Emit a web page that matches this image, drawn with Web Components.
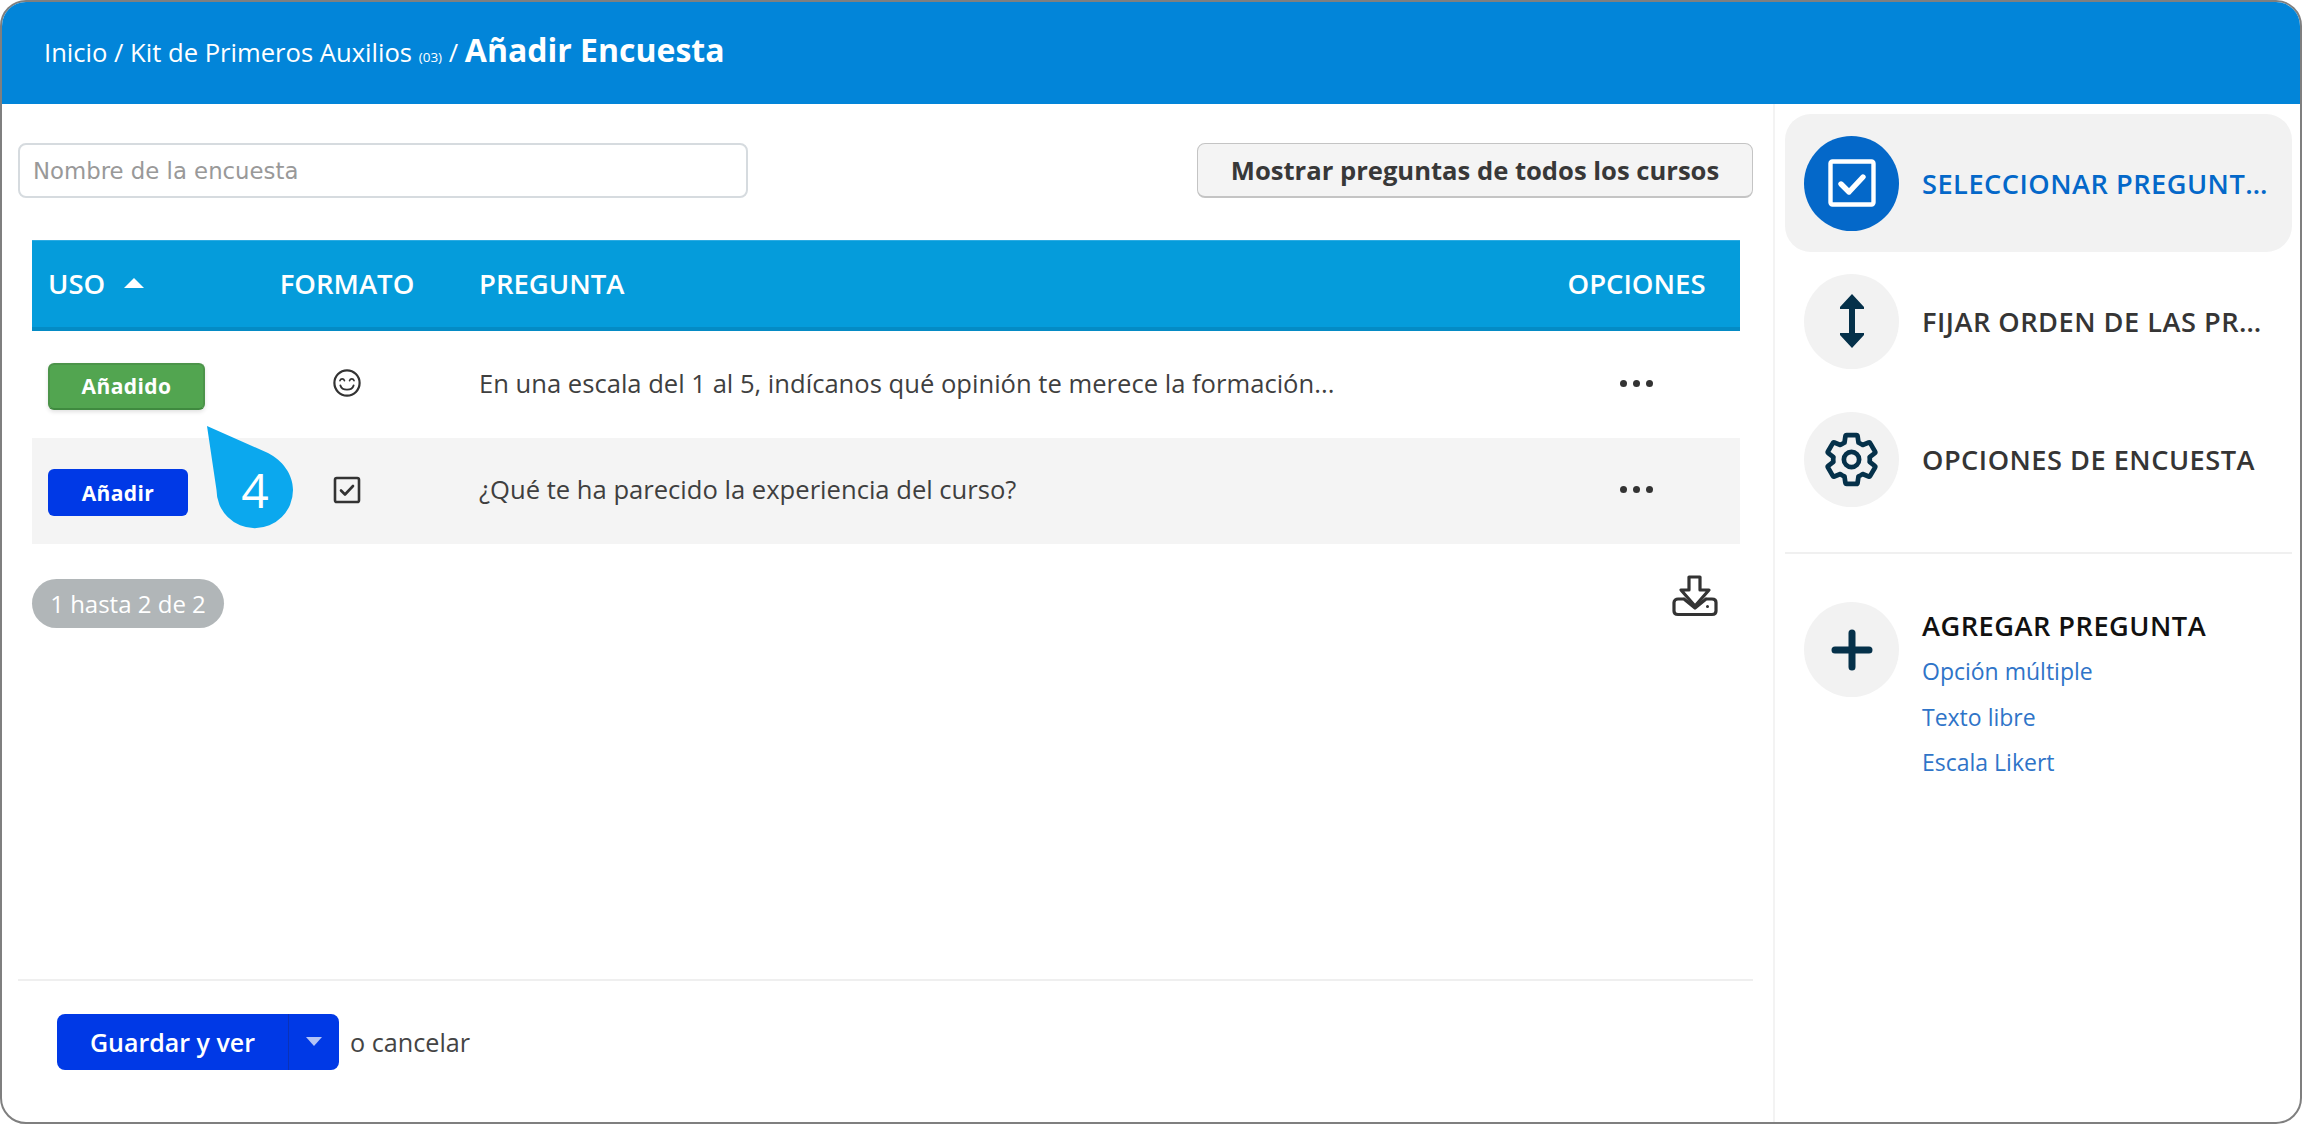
<!DOCTYPE html>
<html lang="es">
<head>
<meta charset="utf-8">
<title>Añadir Encuesta</title>
<style>
html, body { margin: 0; padding: 0; height: 100%; background: #fff; }
body { font-family: "Open Sans", "Liberation Sans", sans-serif; color: #3a3a3a; }
</style>
</head>
<body>
<survey-app>
  <crumb-bar slot="top"><span>Inicio / Kit de Primeros Auxilios</span> <small>(03)</small> <span>/</span> <b>Añadir Encuesta</b></crumb-bar>

  <survey-toolbar slot="main">
    <text-field>Nombre de la encuesta</text-field>
    <plain-button>Mostrar preguntas de todos los cursos</plain-button>
  </survey-toolbar>

  <survey-table slot="main">
    <survey-row>
      <state-button slot="use" kind="done">Añadido</state-button>
      <svg slot="format" width="30" height="30" viewBox="0 0 30 30" fill="none" stroke="#333" stroke-width="2.2" stroke-linecap="round">
        <circle cx="15" cy="15" r="12.6"/>
        <path d="M8 12.6c.8-2.4 3.6-2.4 4.4 0M17.6 12.6c.8-2.4 3.600-2.400 4.400 0" stroke-width="1.7"/>
        <path d="M8.4 17.4c1.6 5.6 11.6 5.6 13.2 0" stroke-width="1.9"/>
      </svg>
      En una escala del 1 al 5, indícanos qué opinión te merece la formación...
    </survey-row>
    <survey-row striped>
      <state-button slot="use">Añadir</state-button>
      <svg slot="format" width="28" height="28" viewBox="0 0 28 28" fill="none" stroke="#333" stroke-width="2.6" stroke-linecap="round" stroke-linejoin="round">
        <rect x="2" y="2" width="24" height="24" rx="1.8"/>
        <path d="M8 14.5l4 4 8-8.5"/>
      </svg>
      ¿Qué te ha parecido la experiencia del curso?
    </survey-row>
    <table-foot slot="foot">1 hasta 2 de 2</table-foot>
  </survey-table>

  <save-bar slot="footer"></save-bar>

  <side-item slot="side" active label="SELECCIONAR PREGUNTAS">
    <svg slot="icon" width="50" height="50" viewBox="0 0 50 50" fill="none" stroke="#fff" stroke-linecap="round" stroke-linejoin="round">
      <rect x="3.5" y="3.5" width="43" height="43" rx="2" stroke-width="4.4"/>
      <path d="M14 26l8 8 14-15" stroke-width="5.4"/>
    </svg>
  </side-item>
  <side-item slot="side" label="FIJAR ORDEN DE LAS PREGUNTAS">
    <svg slot="icon" width="26" height="54" viewBox="0 0 26 54" fill="#05314a">
      <path d="M13 0L25 13v2H1v-2zM13 54L1 41v-2h24v2z"/>
      <rect x="10" y="12" width="6" height="30"/>
    </svg>
  </side-item>
  <side-item slot="side" label="OPCIONES DE ENCUESTA">
    <svg slot="icon" width="61" height="61" viewBox="0 0 24 24" fill="none" stroke="#05314a" stroke-width="1.85" stroke-linejoin="round">
      <path d="M19.14 12.94c.04-.3.06-.61.06-.94 0-.32-.02-.64-.07-.94l2.03-1.58c.18-.14.23-.41.12-.61l-1.92-3.32c-.12-.22-.37-.29-.59-.22l-2.39.96c-.5-.38-1.03-.7-1.62-.94l-.36-2.54c-.04-.24-.24-.41-.48-.41h-3.84c-.24 0-.43.17-.47.41l-.36 2.54c-.59.24-1.13.57-1.62.94l-2.39-.96c-.22-.08-.47 0-.59.22L2.74 8.87c-.12.21-.08.47.12.61l2.03 1.58c-.05.3-.09.63-.09.94s.02.64.07.94l-2.03 1.58c-.18.14-.23.41-.12.61l1.92 3.32c.12.22.37.29.59.22l2.39-.96c.5.38 1.03.7 1.62.94l.36 2.54c.05.24.24.41.48.41h3.84c.24 0 .44-.17.47-.41l.36-2.54c.59-.24 1.13-.56 1.62-.94l2.39.96c.22.08.47 0 .59-.22l1.92-3.32c.12-.22.07-.47-.12-.61l-2.01-1.58z"/>
      <circle cx="12" cy="12" r="3"/>
    </svg>
  </side-item>
  <add-question slot="side"></add-question>
</survey-app>

<script>
// small helper, every component is a template plus an open shadow root
function makeTemplate(html) {
  const t = document.createElement('template')
  t.innerHTML = html
  return t
}

class BaseEl extends HTMLElement {
  constructor() {
    super()
    this.attachShadow({ mode: 'open' })
    this.shadowRoot.appendChild(this.constructor.template.content.cloneNode(true))
  }
}

class SurveyApp extends BaseEl {
  static template = makeTemplate(`<style>
    :host { display: flex; flex-direction: column; box-sizing: border-box; width: 100%; height: 100vh;
      border: 2px solid #7f7f7f; border-radius: 26px; overflow: hidden; background: #fff; }
    .body { flex: 1; display: grid; grid-template-columns: 1773px 1fr; min-height: 0; }
    main { display: flex; flex-direction: column; padding: 39px 0 0 16px; border-right: 2px solid #f3f3f3; min-width: 0; }
    .grow { flex: 1; }
    aside { padding: 10px 0 0 10px; min-width: 0; }
  </style>
  <slot name="top"></slot>
  <div class="body">
    <main>
      <div class="grow"><slot name="main"></slot></div>
      <slot name="footer"></slot>
    </main>
    <aside><slot name="side"></slot></aside>
  </div>`)
}

class CrumbBar extends BaseEl {
  static template = makeTemplate(`<style>
    :host { display: flex; align-items: center; box-sizing: border-box; height: 102px; padding: 0 0 7px 42px;
      background: #0285d9; color: #fff; font-size: 25.6px; }
    ::slotted(small) { font-size: 13.5px; }
    ::slotted(b) { font-size: 32px; font-weight: 700; }
  </style><div><slot></slot></div>`)
}

class SurveyToolbar extends BaseEl {
  static template = makeTemplate(`<style>
    :host { display: flex; justify-content: space-between; margin-right: 20px; }
  </style><slot></slot>`)
}

class TextField extends BaseEl {
  static template = makeTemplate(`<style>
    :host { display: flex; align-items: center; box-sizing: border-box; width: 730px; height: 55px; padding: 0 13px;
      border: 2px solid #d6dbdf; border-radius: 8px; background: #fff; color: #999;
      font-family: "DejaVu Sans", sans-serif; font-size: 22.8px; }
  </style><slot></slot>`)
}

class PlainButton extends BaseEl {
  static template = makeTemplate(`<style>
    :host { display: flex; align-items: center; justify-content: center; box-sizing: border-box; width: 556px; height: 55px;
      border: 1px solid #c4c4c4; border-bottom-width: 2px; border-radius: 8px; background: #f4f4f4; color: #383838;
      font-size: 25.6px; font-weight: 700; }
  </style><slot></slot>`)
}

class SurveyTable extends BaseEl {
  static template = makeTemplate(`<style>
    :host { display: block; margin: 42px 33px 0 14px; position: relative; }
    .head { display: grid; grid-template-columns: 218px 194px 1fr 207px; align-items: center; box-sizing: border-box; height: 91px;
      background: #059cdb; border-top: 1px solid #2cabe2; border-bottom: 4px solid #048bc5; color: #fff;
      font-size: 27.5px; font-weight: 600; padding-bottom: 1px; }
    .uso { display: flex; align-items: center; gap: 19px; padding-left: 16px; }
    .uso i { width: 0; height: 0; border: 10px solid transparent; border-top: 0; border-bottom-color: #fff; margin-top: -2px; }
    .c { text-align: center; }
    .q { padding-left: 35px; }
  </style>
  <div class="head">
    <div class="uso">USO <i></i></div>
    <div class="c">FORMATO</div>
    <div class="q">PREGUNTA</div>
    <div class="c">OPCIONES</div>
  </div>
  <slot></slot>
  <slot name="foot"></slot>`)
}

class SurveyRow extends BaseEl {
  static template = makeTemplate(`<style>
    :host { display: grid; grid-template-columns: 218px 194px 1fr 207px; align-items: center; height: 106.5px; color: #3f3f3f; font-size: 25.6px; }
    :host([striped]) { background: #f4f4f4; }
    .use { padding-left: 16px; margin-top: 4px; }
    .fmt { display: flex; justify-content: center; margin-top: -2px; }
    .txt { padding-left: 35px; margin-top: -2px; }
    .dots { display: flex; justify-content: center; gap: 5.6px; margin-top: -2px; }
    .dots i { width: 7.4px; height: 7.4px; border-radius: 50%; background: #333; }
  </style>
  <div class="use"><slot name="use"></slot></div>
  <div class="fmt"><slot name="format"></slot></div>
  <div class="txt"><slot></slot></div>
  <div class="dots"><i></i><i></i><i></i></div>`)
}

class StateButton extends BaseEl {
  static template = makeTemplate(`<style>
    :host { display: inline-flex; align-items: center; justify-content: center; box-sizing: border-box; width: 140px; height: 47px;
      border-radius: 6px; background: #0039e6; color: #fff; font-size: 21px; font-weight: 700; letter-spacing: .4px; vertical-align: middle; }
    :host([kind="done"]) { width: 157px; background: #52a550; border: 2px solid #4c944a; border-bottom-color: #3f8a3f;
      box-shadow: 0 2px 4px rgba(0,0,0,.12); }
  </style><slot></slot>`)
}

class TableFoot extends BaseEl {
  static template = makeTemplate(`<style>
    :host { display: flex; justify-content: space-between; align-items: flex-start; margin-top: 35px; position: relative; }
    .pill { display: flex; align-items: center; justify-content: center; box-sizing: border-box; width: 192px; height: 49px;
      border-radius: 25px; background: #b1b6b8; color: #fff; font-size: 24px; }
    svg { margin: -4px 22px 0 0; }
  </style>
  <div class="pill"><slot></slot></div>
  <svg width="46" height="42" viewBox="0 0 46 42" fill="none" stroke="#333" stroke-width="3.2" stroke-linejoin="round" stroke-linecap="round">
    <path d="M17 2h11v13h9L23 31 9 15h8z" />
    <path d="M12 24H6c-2 0-4 1.500-4 3.500V36c0 2 1.500 3.500 4 3.500h34c2.500 0 4-1.500 4-3.500v-8.500c0-2-1.500-3.500-4-3.500h-6M12 24l11 9 11-9"/>
    <circle cx="35.500" cy="31.500" r=".8" fill="#333" stroke-width="1.400"/>
  </svg>`)
}

class DropBadge extends BaseEl {
  static template = makeTemplate(`<style>
    :host { display: block; position: absolute; left: 207px; top: 426px; width: 87px; height: 104px; z-index: 2; }
    svg { position: absolute; inset: 0; }
    span { position: absolute; left: 19px; top: 24px; width: 58px; text-align: center; color: #fff; font-size: 48px; line-height: 80px; }
  </style>
  <svg width="87" height="104" viewBox="0 0 87 104"><path d="M0 0L61 27C75 34 86 48 86 64A38.250 38.250 0 0 1 9.500 64z" fill="#0ba8ee"/></svg>
  <span><slot></slot></span>`)
}

class SaveBar extends BaseEl {
  static template = makeTemplate(`<style>
    :host { display: flex; align-items: center; gap: 11px; box-sizing: border-box; height: 143px; margin-right: 20px; padding: 0 0 20px 39px;
      border-top: 2px solid #efefef; font-size: 25.2px; color: #444; }
    .btn { display: flex; height: 56px; border-radius: 8px; background: #0039e6; color: #fff; font-size: 25px; font-weight: 600; overflow: hidden; }
    .main { display: flex; align-items: center; justify-content: center; width: 231px; }
    .more { display: flex; align-items: center; justify-content: center; width: 50px; border-left: 1px solid #0a32b8; }
    .more i { width: 0; height: 0; border: 8px solid transparent; border-bottom: 0; border-top: 9px solid #b3c4f7; }
  </style>
  <div class="btn"><div class="main">Guardar y ver</div><div class="more"><i></i></div></div>
  <span>o cancelar</span>`)
}

class SideItem extends BaseEl {
  static template = makeTemplate(`<style>
    :host { display: flex; align-items: center; gap: 23px; box-sizing: border-box; height: 138px; padding: 0 0 0 19px; border-radius: 26px;
      color: #353535; font-size: 27.2px; font-weight: 600; letter-spacing: .5px; width: 507px; }
    :host([active]) { background: #f2f2f2; color: #0468c9; }
    .circle { flex: none; display: flex; align-items: center; justify-content: center; width: 95px; height: 95px; border-radius: 50%; background: #f2f2f2; }
    :host([active]) .circle { background: #0468c9; }
    .label { min-width: 0; overflow: hidden; white-space: nowrap; text-overflow: ellipsis; padding-right: 17px; }
  </style>
  <div class="circle"><slot name="icon"></slot></div>
  <div class="label"></div>`)

  connectedCallback() {
    this.shadowRoot.querySelector('.label').textContent = this.getAttribute('label')
  }
}

class AddQuestion extends BaseEl {
  static template = makeTemplate(`<style>
    :host { display: flex; gap: 23px; box-sizing: border-box; width: 507px; margin-top: 24px; padding: 48px 0 0 19px; border-top: 2px solid #f0f0f0; }
    .circle { flex: none; display: flex; align-items: center; justify-content: center; width: 95px; height: 95px; border-radius: 50%; background: #f2f2f2; }
    h3 { margin: 2px 0 7px; color: #111; font-size: 27.2px; font-weight: 600; letter-spacing: .5px; line-height: 44px; }
    a { display: block; color: #2f74c8; font-size: 23px; line-height: 45.500px; text-decoration: none; }
    .links { margin-top: -6px; }
  </style>
  <div class="circle">
    <svg width="42" height="42" viewBox="0 0 42 42" stroke="#05314a" stroke-width="7" stroke-linecap="round"><path d="M21 4v34M4 21h34"/></svg>
  </div>
  <div>
    <h3>AGREGAR PREGUNTA</h3>
    <div class="links">
      <a href="#">Opción múltiple</a>
      <a href="#">Texto libre</a>
      <a href="#">Escala Likert</a>
    </div>
  </div>`)
}

customElements.define('survey-app', SurveyApp)
customElements.define('crumb-bar', CrumbBar)
customElements.define('survey-toolbar', SurveyToolbar)
customElements.define('text-field', TextField)
customElements.define('plain-button', PlainButton)
customElements.define('survey-table', SurveyTable)
customElements.define('survey-row', SurveyRow)
customElements.define('state-button', StateButton)
customElements.define('table-foot', TableFoot)
customElements.define('drop-badge', DropBadge)
customElements.define('save-bar', SaveBar)
customElements.define('side-item', SideItem)
customElements.define('add-question', AddQuestion)

// step marker sits over the table rows
const badge = document.createElement('drop-badge')
badge.textContent = '4'
document.body.appendChild(badge)
</script>
</body>
</html>
